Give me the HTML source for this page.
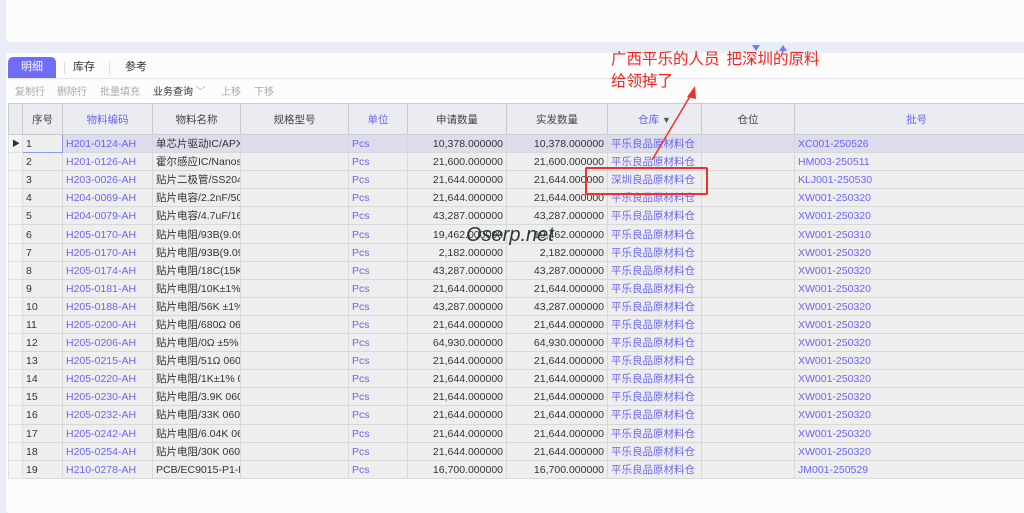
<!DOCTYPE html>
<html><head><meta charset="utf-8"><style>
*{box-sizing:border-box;margin:0;padding:0}
body{width:1024px;height:507px;overflow:hidden;background:#e9edf5;font-family:"Liberation Sans","Noto Sans CJK SC",sans-serif;font-size:11px;color:#333;position:relative}
.top{position:absolute;left:6px;top:0;width:1030px;height:42px;background:#fcfcfd;border-radius:0 0 4px 4px}
.panel{position:absolute;left:6px;top:53px;width:1030px;height:460px;background:#fcfcfd;border-radius:4px}
.tab{position:absolute;top:57px;height:21px;line-height:21px;font-size:11px}
.t1{left:8px;width:48px;background:#6f6cf7;color:#fff;text-align:center;border-radius:5px 5px 0 0}
.tabline{position:absolute;left:8px;top:78px;width:1016px;height:1px;background:#e3e5ee}
.sep{position:absolute;top:62px;width:1px;height:12px;background:#ddd}
.tb{position:absolute;top:83px;font-size:10px;color:#aaa}
table{position:absolute;left:8px;top:103px;border-collapse:collapse;table-layout:fixed;width:1030px}
td,th{border:1px solid #d8d8d8;white-space:nowrap;overflow:hidden;height:18.1px;padding:1px 3px 0;font-weight:normal;font-size:10.5px;line-height:12px;vertical-align:middle}
th{height:31px;background:#eaecf2;color:#444;text-align:center;border-color:#ccc}
th.b,td.b{color:#6b66f0}
tr.r td{background:#eeeeee}
tr.s td{background:#dcdcec}
td.n{text-align:right}
td.i{background:#f4f4f6!important;border-color:#e0e0e0}
.note{position:absolute;left:611px;top:47px;color:#f4231f;font-size:15.5px;line-height:22px;font-family:"Noto Sans CJK SC",sans-serif}
.box{position:absolute;left:585px;top:167px;width:123px;height:28px;border:2px solid #f0302a;border-radius:2px}
.wm{position:absolute;left:466px;top:224px;font-size:20px;font-style:italic;color:#2a3a3a;font-family:"Liberation Sans",sans-serif}
</style></head><body>
<div class="top"></div>
<div class="panel"></div>
<div class="tab t1">明细</div>
<div class="sep" style="left:64px"></div>
<div class="tab" style="left:73px">库存</div>
<div class="sep" style="left:109px"></div>
<div class="tab" style="left:125px">参考</div>
<div class="tabline"></div>
<div class="tb" style="left:15px">复制行</div>
<div class="tb" style="left:57px">删除行</div>
<div class="tb" style="left:100px">批量填充</div>
<div class="tb" style="left:153px;color:#333">业务查询 <span style="color:#aaa">﹀</span></div>
<div class="tb" style="left:221px">上移</div>
<div class="tb" style="left:254px">下移</div>
<table>
<colgroup><col style="width:14px"><col style="width:40px"><col style="width:90px"><col style="width:88px"><col style="width:108px"><col style="width:59px"><col style="width:99px"><col style="width:101px"><col style="width:94px"><col style="width:93px"><col style="width:244px"></colgroup>
<tr><th></th><th>序号</th><th class="b">物料编码</th><th>物料名称</th><th>规格型号</th><th class="b">单位</th><th>申请数量</th><th>实发数量</th><th class="b">仓库 <span style="color:#555;font-size:9px;vertical-align:top">▼</span></th><th>仓位</th><th class="b">批号</th></tr>
<tr class="s"><td class="i" style="font-size:8px;color:#234">▶</td><td style="border:1px solid #8a9de0;background:#eee">1</td><td class="b">H201-0124-AH</td><td>单芯片驱动IC/APX</td><td></td><td class="b">Pcs</td><td class="n">10,378.000000</td><td class="n">10,378.000000</td><td class="b">平乐良品原材料仓</td><td></td><td class="b">XC001-250526</td></tr>
<tr class="r"><td class="i"></td><td>2</td><td class="b">H201-0126-AH</td><td>霍尔感应IC/Nanos</td><td></td><td class="b">Pcs</td><td class="n">21,600.000000</td><td class="n">21,600.000000</td><td class="b">平乐良品原材料仓</td><td></td><td class="b">HM003-250511</td></tr>
<tr class="r"><td class="i"></td><td>3</td><td class="b">H203-0026-AH</td><td>贴片二极管/SS204</td><td></td><td class="b">Pcs</td><td class="n">21,644.000000</td><td class="n">21,644.000000</td><td class="b">深圳良品原材料仓</td><td></td><td class="b">KLJ001-250530</td></tr>
<tr class="r"><td class="i"></td><td>4</td><td class="b">H204-0069-AH</td><td>贴片电容/2.2nF/50</td><td></td><td class="b">Pcs</td><td class="n">21,644.000000</td><td class="n">21,644.000000</td><td class="b">平乐良品原材料仓</td><td></td><td class="b">XW001-250320</td></tr>
<tr class="r"><td class="i"></td><td>5</td><td class="b">H204-0079-AH</td><td>贴片电容/4.7uF/16</td><td></td><td class="b">Pcs</td><td class="n">43,287.000000</td><td class="n">43,287.000000</td><td class="b">平乐良品原材料仓</td><td></td><td class="b">XW001-250320</td></tr>
<tr class="r"><td class="i"></td><td>6</td><td class="b">H205-0170-AH</td><td>贴片电阻/93B(9.09</td><td></td><td class="b">Pcs</td><td class="n">19,462.000000</td><td class="n">19,462.000000</td><td class="b">平乐良品原材料仓</td><td></td><td class="b">XW001-250310</td></tr>
<tr class="r"><td class="i"></td><td>7</td><td class="b">H205-0170-AH</td><td>贴片电阻/93B(9.09</td><td></td><td class="b">Pcs</td><td class="n">2,182.000000</td><td class="n">2,182.000000</td><td class="b">平乐良品原材料仓</td><td></td><td class="b">XW001-250320</td></tr>
<tr class="r"><td class="i"></td><td>8</td><td class="b">H205-0174-AH</td><td>贴片电阻/18C(15K</td><td></td><td class="b">Pcs</td><td class="n">43,287.000000</td><td class="n">43,287.000000</td><td class="b">平乐良品原材料仓</td><td></td><td class="b">XW001-250320</td></tr>
<tr class="r"><td class="i"></td><td>9</td><td class="b">H205-0181-AH</td><td>贴片电阻/10K±1%</td><td></td><td class="b">Pcs</td><td class="n">21,644.000000</td><td class="n">21,644.000000</td><td class="b">平乐良品原材料仓</td><td></td><td class="b">XW001-250320</td></tr>
<tr class="r"><td class="i"></td><td>10</td><td class="b">H205-0188-AH</td><td>贴片电阻/56K ±1%</td><td></td><td class="b">Pcs</td><td class="n">43,287.000000</td><td class="n">43,287.000000</td><td class="b">平乐良品原材料仓</td><td></td><td class="b">XW001-250320</td></tr>
<tr class="r"><td class="i"></td><td>11</td><td class="b">H205-0200-AH</td><td>贴片电阻/680Ω 06</td><td></td><td class="b">Pcs</td><td class="n">21,644.000000</td><td class="n">21,644.000000</td><td class="b">平乐良品原材料仓</td><td></td><td class="b">XW001-250320</td></tr>
<tr class="r"><td class="i"></td><td>12</td><td class="b">H205-0206-AH</td><td>贴片电阻/0Ω ±5%</td><td></td><td class="b">Pcs</td><td class="n">64,930.000000</td><td class="n">64,930.000000</td><td class="b">平乐良品原材料仓</td><td></td><td class="b">XW001-250320</td></tr>
<tr class="r"><td class="i"></td><td>13</td><td class="b">H205-0215-AH</td><td>贴片电阻/51Ω 060</td><td></td><td class="b">Pcs</td><td class="n">21,644.000000</td><td class="n">21,644.000000</td><td class="b">平乐良品原材料仓</td><td></td><td class="b">XW001-250320</td></tr>
<tr class="r"><td class="i"></td><td>14</td><td class="b">H205-0220-AH</td><td>贴片电阻/1K±1% 0</td><td></td><td class="b">Pcs</td><td class="n">21,644.000000</td><td class="n">21,644.000000</td><td class="b">平乐良品原材料仓</td><td></td><td class="b">XW001-250320</td></tr>
<tr class="r"><td class="i"></td><td>15</td><td class="b">H205-0230-AH</td><td>贴片电阻/3.9K 060</td><td></td><td class="b">Pcs</td><td class="n">21,644.000000</td><td class="n">21,644.000000</td><td class="b">平乐良品原材料仓</td><td></td><td class="b">XW001-250320</td></tr>
<tr class="r"><td class="i"></td><td>16</td><td class="b">H205-0232-AH</td><td>贴片电阻/33K 060</td><td></td><td class="b">Pcs</td><td class="n">21,644.000000</td><td class="n">21,644.000000</td><td class="b">平乐良品原材料仓</td><td></td><td class="b">XW001-250320</td></tr>
<tr class="r"><td class="i"></td><td>17</td><td class="b">H205-0242-AH</td><td>贴片电阻/6.04K 06</td><td></td><td class="b">Pcs</td><td class="n">21,644.000000</td><td class="n">21,644.000000</td><td class="b">平乐良品原材料仓</td><td></td><td class="b">XW001-250320</td></tr>
<tr class="r"><td class="i"></td><td>18</td><td class="b">H205-0254-AH</td><td>贴片电阻/30K 060</td><td></td><td class="b">Pcs</td><td class="n">21,644.000000</td><td class="n">21,644.000000</td><td class="b">平乐良品原材料仓</td><td></td><td class="b">XW001-250320</td></tr>
<tr class="r"><td class="i"></td><td>19</td><td class="b">H210-0278-AH</td><td>PCB/EC9015-P1-H</td><td></td><td class="b">Pcs</td><td class="n">16,700.000000</td><td class="n">16,700.000000</td><td class="b">平乐良品原材料仓</td><td></td><td class="b">JM001-250529</td></tr>
</table>
<div class="note">广西平乐的人员&nbsp;&nbsp;把深圳的原料<br>给领掉了</div>
<div class="box"></div>
<svg style="position:absolute;left:0;top:0" width="1024" height="507"><line x1="652" y1="160" x2="692" y2="93" stroke="#f0302a" stroke-width="1.5"/><polygon points="695,86 687,97 696,99" fill="#f0302a"/><polygon points="752,45 760,45 756,51" fill="#7b7bf5"/><polygon points="779,51 787,51 783,45" fill="#7b7bf5"/></svg>
<div class="wm">Oserp.net</div>
</body></html>
